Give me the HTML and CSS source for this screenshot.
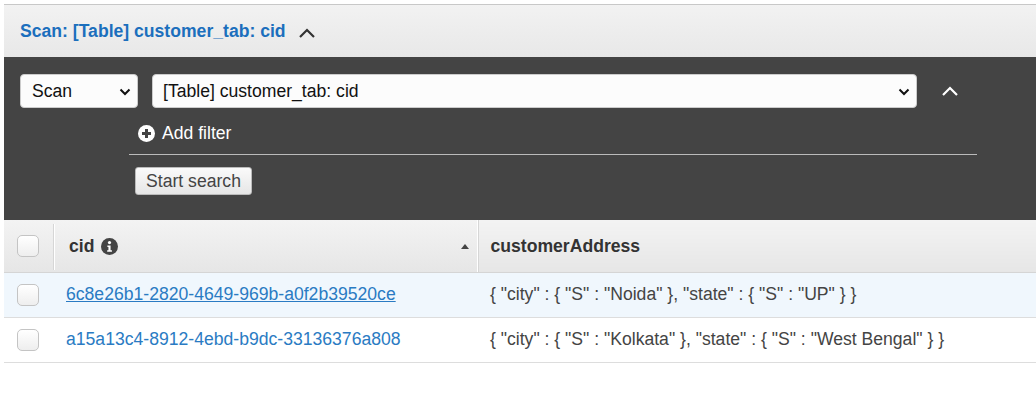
FILE: index.html
```html
<!DOCTYPE html>
<html>
<head>
<meta charset="utf-8">
<link rel="stylesheet" href="styles.css">
</head>
<body>
<div class="page">
  <div class="titlebar">
    <span class="title">Scan: [Table] customer_tab: cid</span>
    <svg class="chev-dark" width="18" height="12" viewBox="0 0 18 12"><path d="M2 10 L9 3 L16 10" fill="none" stroke="#333" stroke-width="2.2"/></svg>
  </div>
  <div class="panel">
    <div class="selects">
      <div class="select small"><span>Scan</span><svg width="12" height="8" viewBox="0 0 12 8"><path d="M1.5 1.5 L6 6 L10.5 1.5" fill="none" stroke="#111" stroke-width="2"/></svg></div>
      <div class="select big"><span>[Table] customer_tab: cid</span><svg width="12" height="8" viewBox="0 0 12 8"><path d="M1.5 1.5 L6 6 L10.5 1.5" fill="none" stroke="#111" stroke-width="2"/></svg></div>
      <svg class="chev-light" width="18" height="12" viewBox="0 0 18 12"><path d="M2 10 L9 3 L16 10" fill="none" stroke="#fff" stroke-width="2.2"/></svg>
    </div>
    <div class="filters">
      <div class="addfilter">
        <svg width="17" height="17" viewBox="0 0 17 17"><circle cx="8.5" cy="8.5" r="8.5" fill="#fff"/><path d="M8.5 4 V13 M4 8.5 H13" stroke="#444" stroke-width="3"/></svg>
        <span>Add filter</span>
      </div>
      <div class="rule"></div>
      <button class="start">Start search</button>
    </div>
  </div>
  <table class="grid">
    <thead>
      <tr>
        <th class="cb"><span class="box"></span></th>
        <th class="cid"><div class="thin"><span>cid</span><svg width="17" height="17" viewBox="0 0 16 16"><circle cx="8" cy="8" r="8" fill="#444"/><circle cx="8" cy="4.3" r="1.5" fill="#fff"/><path d="M6 7 H9 V11.5 H10.3 V13 H5.8 V11.5 H7 V8.5 H6 Z" fill="#fff"/></svg><span class="sort"></span></div></th>
        <th class="addr"><span class="addrlabel">customerAddress</span></th>
      </tr>
    </thead>
    <tbody>
      <tr class="sel">
        <td class="cb"><span class="box"></span></td>
        <td class="cid"><a class="u">6c8e26b1-2820-4649-969b-a0f2b39520ce</a></td>
        <td class="addr">{ "city" : { "S" : "Noida" }, "state" : { "S" : "UP" } }</td>
      </tr>
      <tr>
        <td class="cb"><span class="box"></span></td>
        <td class="cid"><a>a15a13c4-8912-4ebd-b9dc-33136376a808</a></td>
        <td class="addr">{ "city" : { "S" : "Kolkata" }, "state" : { "S" : "West Bengal" } }</td>
      </tr>
    </tbody>
  </table>
</div>
</body>
</html>
```
FILE: styles.css
```css
html, body { margin: 0; padding: 0; background: #fff; }
body { font-family: "Liberation Sans", Arial, sans-serif; font-size: 17.6px; color: #444; }
.page { margin: 4px 0 0 4px; }
.titlebar {
  border-top: 1px solid #c8c8c8;
  background: linear-gradient(#f2f2f2, #e8e8e8);
  display: flex; align-items: center;
  padding-left: 16px;
  box-sizing: border-box;
  height: 53px;
}
.title { color: #1b6fbd; font-weight: bold; font-size: 17.6px; }
.chev-dark { margin-left: 12px; margin-top: 3px; }
.panel { background: #444; height: 163px; box-sizing: border-box; padding: 17px 0 0 16px; }
.selects { display: flex; align-items: center; }
.select {
  height: 34px; box-sizing: border-box;
  background: #fcfcfc; border: 1px solid #ccc; border-radius: 4px;
  display: flex; align-items: center; justify-content: space-between;
  padding: 1px 6px 0 11px; color: #111; font-size: 17.6px;
}
.select.small { width: 118px; }
.select.big { width: 765px; margin-left: 14px; padding-left: 10px; }
.chev-light { margin-left: 24px; }
.filters { margin-left: 109px; width: 848px; }
.addfilter { display: flex; align-items: center; gap: 7px; margin: 17px 0 0 9px; color: #fff; font-size: 17.6px; height: 17px; }
.rule { height: 1px; background: #bbb; margin-top: 12px; }
.start {
  margin: 12px 0 0 6px; height: 28px; width: 117px;
  font-family: "Liberation Sans", Arial, sans-serif; font-size: 17.6px; color: #444;
  background: linear-gradient(#fafafa, #e6e6e6); border: 1px solid #bbb; border-radius: 3px;
  padding: 0;
}
.grid { border-collapse: collapse; width: 1032px; table-layout: fixed; }
.grid th {
  height: 52px; padding: 0; text-align: left; font-weight: bold; color: #333;
  background: linear-gradient(#f3f3f3, #e6e6e6); border-bottom: 1px solid #d5d5d5;
  box-sizing: border-box;
}
.grid th.cb { width: 50px; text-align: center; }
.grid th.cid { width: 423px; }
.thin {
  height: 46px; display: flex; align-items: center; gap: 7px;
  border-left: 1px solid #fff; box-shadow: -1px 0 0 #d6d6d6;
  padding-left: 14px; padding-right: 8px; margin-top: 2px;
}
.thin .sort { margin-left: auto; width: 0; height: 0; border-left: 4px solid transparent; border-right: 4px solid transparent; border-bottom: 5px solid #444; }
.grid th.addr { padding-left: 13px; border-left: 1px solid #fff; box-shadow: inset 1px 0 0 #d6d6d6; }
.addrlabel { position: relative; top: 1px; }
.grid td { height: 44px; padding: 0; border-bottom: 1px solid #ddd; }
.grid tr.sel td { background: #f0f7fd; }
.grid td.cb { text-align: center; }
.box {
  display: inline-block; width: 22px; height: 22px; box-sizing: border-box; vertical-align: middle;
  border: 1px solid #c4c4c4; border-radius: 5px; background: linear-gradient(#fff, #eee);
  margin-left: -2px;
}
td.cid { padding-left: 12px; }
td.cid a { color: #2a7bc3; }
td.cid a.u { text-decoration: underline; }
td.addr { padding-left: 13px; color: #444; }
```
